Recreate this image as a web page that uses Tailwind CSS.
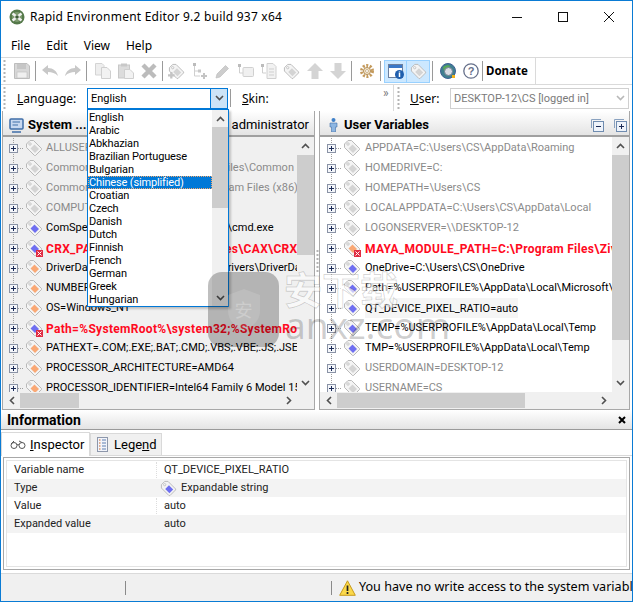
<!DOCTYPE html>
<html lang="en">
<head>
<meta charset="UTF-8" />
<title>Rapid Environment Editor</title>
<script src="https://cdn.jsdelivr.net/npm/@tailwindcss/browser@4"></script>
</head>
<body class="bg-white">
<svg class="hidden">
	<symbol id="tree" viewBox="0 0 20 20">
		<path d="M8.500 0V20M13 10.500H19" stroke="#a0a0a0" stroke-dasharray="1 1" fill="none" />
		<rect x="4.500" y="6.500" width="8" height="8" fill="#f4f6fa" stroke="#8a93a6" />
		<path d="M6 10.500H11M8.500 8V13" stroke="#1a2a55" />
	</symbol>
	<symbol id="tag" viewBox="0 0 18 18">
		<path d="M1.500 5 5 1.500H8.500L16.500 9.500V10.500L10.500 16.500H9.500L1.500 8.500Z" fill="#f4f4f4" stroke="#b9b9b9" />
		<circle cx="5" cy="5" r="1.200" fill="#fff" stroke="#b0b0b0" stroke-width=".7" />
	</symbol>
	<symbol id="tag-gray" viewBox="0 0 18 18">
		<use href="#tag" />
		<path d="M5.500 9.500 9.500 5.500 14 10 10 14Z" fill="#d4d4d4" />
	</symbol>
	<symbol id="tag-blue" viewBox="0 0 18 18">
		<use href="#tag" />
		<path d="M5.500 9.500 9.500 5.500 14 10 10 14Z" fill="#6f6ff0" />
	</symbol>
	<symbol id="tag-orange" viewBox="0 0 18 18">
		<use href="#tag" />
		<path d="M5.500 9.500 9.500 5.500 14 10 10 14Z" fill="#f9a875" />
	</symbol>
	<symbol id="badge" viewBox="0 0 18 18">
		<rect x="11" y="11" width="7" height="7" fill="#e02c42" />
		<path d="M12.500 12.500 16.500 16.500M16.500 12.500 12.500 16.500" stroke="#fff" />
	</symbol>
	<symbol id="up" viewBox="0 0 9 6"><path d="M1 5 4.500 1.500 8 5" fill="none" stroke="#505050" stroke-width="1.600" /></symbol>
	<symbol id="down" viewBox="0 0 9 6"><path d="M1 1 4.500 4.500 8 1" fill="none" stroke="#505050" stroke-width="1.600" /></symbol>
	<symbol id="left" viewBox="0 0 6 9"><path d="M5 1 1.500 4.500 5 8" fill="none" stroke="#505050" stroke-width="1.600" /></symbol>
	<symbol id="right" viewBox="0 0 6 9"><path d="M1 1 4.500 4.500 1 8" fill="none" stroke="#505050" stroke-width="1.600" /></symbol>
	<symbol id="grip" viewBox="0 0 3 22"><path d="M1.500 0V22" stroke="#b4b4b4" stroke-width="2" stroke-dasharray="2 2" /></symbol>
</svg>

<div class="relative flex h-[602px] w-[633px] flex-col overflow-hidden border border-[#0a7bd4] bg-white font-['Roboto',sans-serif] text-[11px] text-black">
	<!-- title bar -->
	<div class="flex h-[31px] shrink-0 items-center">
		<svg class="ml-[8px] h-[16px] w-[16px]" viewBox="0 0 16 16">
			<circle cx="8" cy="8" r="7.500" fill="#55794a" />
			<circle cx="8" cy="8" r="5" fill="#7d9a6f" />
			<path d="M3.500 4.500 12.500 11.500M12.500 4.500 3.500 11.500" stroke="#f0f0f0" stroke-width="2.400" />
			<circle cx="8" cy="8" r="1.800" fill="#3d5a36" />
		</svg>
		<span class="ml-[5px] font-['Noto_Sans',sans-serif] text-[12px] tracking-[0.22px]">Rapid Environment Editor 9.2 build 937 x64</span>
		<div class="ml-auto flex items-center">
			<svg class="h-[10px] w-[46px]" viewBox="0 0 46 10"><path d="M18 5.500H28" stroke="#111" /></svg>
			<svg class="h-[10px] w-[46px]" viewBox="0 0 46 10"><rect x="18.500" y=".5" width="9" height="9" fill="none" stroke="#111" /></svg>
			<svg class="h-[10px] w-[46px]" viewBox="0 0 46 10"><path d="M18 0 28 10M28 0 18 10" stroke="#111" /></svg>
		</div>
	</div>
	<!-- menu -->
	<div class="flex h-[25px] shrink-0 items-center gap-[16px] pt-[3px] pl-[10px] font-['Noto_Sans',sans-serif] text-[12px]">
		<span>File</span><span>Edit</span><span>View</span><span>Help</span>
	</div>
	<!-- toolbar -->
	<div class="flex h-[28px] shrink-0 border-y border-[#dadada]">
		<div class="flex h-full w-[535px] items-center border-r border-[#dadada] pl-[2px]">
			<svg class="h-[22px] w-[3px]"><use href="#grip" /></svg>
			<div class="w-[4px]"></div>
			<div class="flex h-[23px] w-[23px] items-center justify-center">
				<svg class="h-[16px] w-[16px]" viewBox="0 0 16 16"><path d="M.5.5H13L15.500 3V15.500H.5Z" fill="#d8d8d8" stroke="#bdbdbd" /><rect x="3" y="1" width="9" height="5" fill="#c6c6c6" /><rect x="3" y="9" width="10" height="6" fill="#f0f0f0" stroke="#bdbdbd" stroke-width=".6" /></svg>
			</div>
			<div class="mx-[2px] h-[20px] w-[1px] bg-[#9a9a9a]"></div>
			<div class="flex h-[23px] w-[23px] items-center justify-center">
				<svg class="h-[12px] w-[16px]" viewBox="0 0 16 12"><path d="M0 5 6 0V3C11 3 15 6 16 11 13 8 10 7 6 7V10Z" fill="#c8c8c8" /></svg>
			</div>
			<div class="flex h-[23px] w-[23px] items-center justify-center">
				<svg class="h-[12px] w-[16px]" viewBox="0 0 16 12"><path d="M16 5 10 0V3C5 3 1 6 0 11 3 8 6 7 10 7V10Z" fill="#c8c8c8" /></svg>
			</div>
			<div class="mx-[2px] h-[20px] w-[1px] bg-[#9a9a9a]"></div>
			<div class="w-[2px]"></div>
			<div class="flex h-[23px] w-[23px] items-center justify-center">
				<svg class="h-[16px] w-[16px]" viewBox="0 0 16 16"><path d="M.5.5H7L9 2.500V12H.5Z" fill="#eee" stroke="#d4d4d4" /><path d="M6.500 4.500H12L15.500 8V15.500H6.500Z" fill="#f2f2f2" stroke="#cfcfcf" /></svg>
			</div>
			<div class="flex h-[23px] w-[23px] items-center justify-center">
				<svg class="h-[16px] w-[16px]" viewBox="0 0 16 16"><rect x=".5" y="2" width="11" height="13" fill="#dcdcdc" stroke="#c8c8c8" /><rect x="3" y=".5" width="6" height="3" fill="#c8c8c8" /><path d="M6.500 6.500H12L15.500 10V15.500H6.500Z" fill="#f2f2f2" stroke="#cfcfcf" /></svg>
			</div>
			<div class="flex h-[23px] w-[23px] items-center justify-center">
				<svg class="h-[16px] w-[16px]" viewBox="0 0 16 16"><path d="M2 2 14 14M14 2 2 14" stroke="#bcbcbc" stroke-width="4.400" /></svg>
			</div>
			<div class="mx-[2px] h-[20px] w-[1px] bg-[#9a9a9a]"></div>
			<div class="flex h-[23px] w-[23px] items-center justify-center">
				<svg class="h-[17px] w-[17px]" viewBox="0 0 18 18"><use href="#tag-gray" /><path d="M0 13H7M3.500 9.500V16.500" stroke="#c4c4c4" stroke-width="2.400" /></svg>
			</div>
			<div class="flex h-[23px] w-[23px] items-center justify-center">
				<svg class="h-[16px] w-[16px]" viewBox="0 0 16 16"><path d="M2.500 3V13H8M2.500 8H6" stroke="#cfcfcf" fill="none" /><rect x="1" y="0" width="3" height="3" fill="#bcbcbc" /><rect x="6" y="6.500" width="3" height="3" fill="#c8c8c8" /><path d="M9 13H15M12 10V16" stroke="#c4c4c4" stroke-width="2" /></svg>
			</div>
			<div class="flex h-[23px] w-[23px] items-center justify-center">
				<svg class="h-[15px] w-[15px]" viewBox="0 0 15 15"><path d="M1 14 2 10 10.500 1.500 13.500 4.500 5 13Z" fill="#cdcdcd" stroke="#bdbdbd" stroke-width=".7" /></svg>
			</div>
			<div class="flex h-[23px] w-[23px] items-center justify-center">
				<svg class="h-[16px] w-[16px]" viewBox="0 0 16 16"><path d="M1.500 2V10H5" stroke="#cfcfcf" fill="none" /><rect x="0" y="1" width="3" height="3" fill="#bcbcbc" /><rect x="5" y="4.500" width="10.500" height="9" rx="1" fill="#f0f0f0" stroke="#d0d0d0" /></svg>
			</div>
			<div class="flex h-[23px] w-[23px] items-center justify-center">
				<svg class="h-[16px] w-[16px]" viewBox="0 0 16 16"><path d="M1.500 2V10H5" stroke="#cfcfcf" fill="none" /><rect x="0" y="1" width="3" height="3" fill="#bcbcbc" /><path d="M6 .5H12L15 3.500V15.500H6Z" fill="#f2f2f2" stroke="#d0d0d0" /><path d="M8 6H13M8 9H13M8 12H13" stroke="#cfcfcf" /></svg>
			</div>
			<div class="flex h-[23px] w-[23px] items-center justify-center">
				<svg class="h-[17px] w-[17px]" viewBox="0 0 18 18"><use href="#tag-gray" /></svg>
			</div>
			<div class="flex h-[23px] w-[23px] items-center justify-center">
				<svg class="h-[16px] w-[16px]" viewBox="0 0 16 16"><path d="M8 0 16 8H11.500V16H4.500V8H0Z" fill="#d4d4d4" /></svg>
			</div>
			<div class="flex h-[23px] w-[23px] items-center justify-center">
				<svg class="h-[16px] w-[16px]" viewBox="0 0 16 16"><path d="M8 16 16 8H11.500V0H4.500V8H0Z" fill="#d4d4d4" /></svg>
			</div>
			<div class="mx-[2px] h-[20px] w-[1px] bg-[#9a9a9a]"></div>
			<div class="w-[1px]"></div>
			<div class="flex h-[23px] w-[23px] items-center justify-center">
				<svg class="h-[16px] w-[16px]" viewBox="0 0 16 16"><circle cx="8" cy="8" r="5.500" fill="none" stroke="#c49a5c" stroke-width="3" stroke-dasharray="2 1.500" /><circle cx="8" cy="8" r="3.500" fill="#f6ead4" stroke="#b08a50" /><circle cx="8" cy="8" r="1.500" fill="#fff" stroke="#b08a50" stroke-width=".6" /></svg>
			</div>
			<div class="mx-[2px] h-[20px] w-[1px] bg-[#9a9a9a]"></div>
			<div class="w-[1px]"></div>
			<div class="flex h-[23px] w-[23px] items-center justify-center border border-[#99d1ff] bg-[#cce8ff]">
				<svg class="h-[16px] w-[16px]" viewBox="0 0 16 16"><rect x=".5" y="1.500" width="14" height="13" fill="#fff" stroke="#6c7f9e" /><rect x="1" y="2" width="13" height="3" fill="#3a78c8" /><circle cx="11.500" cy="11.500" r="4.500" fill="#1f5fae" /><path d="M11.500 10V14M11.500 8.500V9.500" stroke="#fff" stroke-width="1.500" /></svg>
			</div>
			<div class="flex h-[23px] w-[23px] items-center justify-center border border-[#99d1ff] border-l-0 bg-[#cce8ff]">
				<svg class="h-[17px] w-[17px]" viewBox="0 0 18 18"><use href="#tag-gray" /></svg>
			</div>
			<div class="mx-[2px] h-[20px] w-[1px] bg-[#9a9a9a]"></div>
			<div class="w-[1px]"></div>
			<div class="flex h-[23px] w-[23px] items-center justify-center">
				<svg class="h-[16px] w-[16px]" viewBox="0 0 16 16"><circle cx="8" cy="8" r="7.500" fill="#3f7f8f" stroke="#3d5f94" /><path d="M3 4Q7 1 10 3L8 7 4 8Z" fill="#58a95a" /><circle cx="8.500" cy="8.500" r="4" fill="#d8dce4" stroke="#6f7f92" /><rect x="12" y="12" width="3" height="3" fill="#f2b21a" /></svg>
			</div>
			<div class="flex h-[23px] w-[23px] items-center justify-center">
				<svg class="h-[16px] w-[16px]" viewBox="0 0 16 16"><circle cx="8" cy="8" r="7.200" fill="#fff" stroke="#66708a" stroke-width="1.300" /><text x="8" y="12" text-anchor="middle" font-family="Liberation Sans" font-size="11" font-weight="700" fill="#66708a">?</text></svg>
			</div>
			<div class="mr-[3px] h-[20px] w-[1px] bg-[#9a9a9a]"></div>
			<span class="font-['Noto_Sans',sans-serif] text-[11.500px] font-bold">Donate</span>
		</div>
	</div>
	<!-- language bar -->
	<div class="flex h-[26px] shrink-0 items-center pl-[2px]">
		<svg class="h-[22px] w-[3px]"><use href="#grip" /></svg>
		<span class="ml-[11px] w-[70px] pt-[2px] font-['Noto_Sans',sans-serif] text-[12px]"><u>L</u>anguage:</span>
		<div class="flex h-[21px] w-[141px] items-center justify-between border border-[#0078d7] pl-[3px]">
			<span class="pt-[2px]">English</span>
			<div class="flex h-full w-[17px] items-center justify-center border-l border-[#0078d7] bg-[#cce4f7]">
				<svg class="h-[6px] w-[9px]"><use href="#down" /></svg>
			</div>
		</div>
		<div class="ml-[2px] h-[18px] w-[1px] bg-[#9a9a9a]"></div>
		<span class="ml-[11px] w-[141px] pt-[2px] font-['Noto_Sans',sans-serif] text-[12px]"><u>S</u>kin:</span>
		<span class="w-[10px] pb-[11px] text-[12px] leading-none text-[#777]">»</span>
		<div class="h-full w-[1px] bg-[#dadada]"></div>
		<svg class="ml-[3px] h-[22px] w-[3px]"><use href="#grip" /></svg>
		<span class="ml-[10px] w-[40px] pt-[2px] font-['Noto_Sans',sans-serif] text-[12px]"><u>U</u>ser:</span>
		<div class="flex h-[21px] w-[179px] items-center justify-between border border-[#d0d0d0] pl-[3px] pr-[3px] text-[#7a7a7a]">
			<span class="pt-[2px]">DESKTOP-12\CS [logged in]</span>
			<svg class="h-[6px] w-[9px] opacity-40"><use href="#down" /></svg>
		</div>
	</div>
	<!-- panels -->
	<div class="flex h-[299px] shrink-0">
		<!-- system -->
		<div class="ml-[1px] flex w-[313px] shrink-0 flex-col border-x border-b border-[#a8a8a8] bg-[#f0f0f0]">
			<div class="flex h-[26px] shrink-0 items-center justify-between border-b-2 border-[#a0a0a0] bg-linear-to-b from-white to-[#e4e4e4] pt-[4px] pr-[5px] pl-[6px]">
				<div class="flex items-center gap-[4px]">
					<svg class="h-[15px] w-[15px]" viewBox="0 0 15 15"><rect x="1" y="1" width="13" height="10" rx="1" fill="#c8d8f0" stroke="#3f6ea8" stroke-width="1.500" /><path d="M3.500 4H11M3.500 7H9" stroke="#3f6ea8" /><path d="M3 14H12" stroke="#3f6ea8" stroke-width="1.500" /></svg>
					<span class="text-[13px] font-bold">System ...</span>
				</div>
				<span class="text-[13px]">administrator</span>
			</div>
			<div class="flex min-h-0 flex-1">
				<div class="min-w-0 flex-1 overflow-hidden whitespace-nowrap pt-[1px] pl-[2px] [&_span]:pt-[1px] [&_svg]:shrink-0">
					<div class="flex h-5 items-center text-[#8a8a8a]"><svg class="h-5 w-5"><use href="#tree" /></svg><svg class="h-[18px] w-[18px]"><use href="#tag-gray" /></svg><span class="ml-[3px]">ALLUSERSPROFILE=C:\ProgramData</span></div>
					<div class="flex h-5 items-center text-[#8a8a8a]"><svg class="h-5 w-5"><use href="#tree" /></svg><svg class="h-[18px] w-[18px]"><use href="#tag-gray" /></svg><span class="ml-[3px]">CommonProgramFiles=C:\Program Files\Common Files</span></div>
					<div class="flex h-5 items-center text-[#8a8a8a]"><svg class="h-5 w-5"><use href="#tree" /></svg><svg class="h-[18px] w-[18px]"><use href="#tag-gray" /></svg><span class="ml-[3px]">CommonProgramFiles(x86)=C:\Program Files (x86)\Common</span></div>
					<div class="flex h-5 items-center text-[#8a8a8a]"><svg class="h-5 w-5"><use href="#tree" /></svg><svg class="h-[18px] w-[18px]"><use href="#tag-gray" /></svg><span class="ml-[3px]">COMPUTERNAME=DESKTOP-12</span></div>
					<div class="flex h-5 items-center"><svg class="h-5 w-5"><use href="#tree" /></svg><svg class="h-[18px] w-[18px]"><use href="#tag-blue" /></svg><span class="ml-[3px]">ComSpec=%SystemRoot%\system32\cmd.exe</span></div>
					<div class="flex h-5 items-center text-[12px] font-bold tracking-[0.3px] text-[#ff0a1e]"><svg class="h-5 w-5"><use href="#tree" /></svg><svg class="h-[18px] w-[18px]"><use href="#tag-blue" /><use href="#badge" /></svg><span class="ml-[3px]">CRX_PATH_X64=C:\Program Files\CAX\CRX</span></div>
					<div class="flex h-5 items-center"><svg class="h-5 w-5"><use href="#tree" /></svg><svg class="h-[18px] w-[18px]"><use href="#tag-orange" /></svg><span class="ml-[3px]">DriverData=C:\Windows\System32\Drivers\DriverData</span></div>
					<div class="flex h-5 items-center"><svg class="h-5 w-5"><use href="#tree" /></svg><svg class="h-[18px] w-[18px]"><use href="#tag-orange" /></svg><span class="ml-[3px]">NUMBER_OF_PROCESSORS=4</span></div>
					<div class="flex h-5 items-center"><svg class="h-5 w-5"><use href="#tree" /></svg><svg class="h-[18px] w-[18px]"><use href="#tag-orange" /></svg><span class="ml-[3px]">OS=Windows_NT</span></div>
					<div class="flex h-5 items-center text-[12px] font-bold tracking-[0.3px] text-[#ff0a1e]"><svg class="h-5 w-5"><use href="#tree" /></svg><svg class="h-[18px] w-[18px]"><use href="#tag-blue" /><use href="#badge" /></svg><span class="ml-[3px]">Path=%SystemRoot%\system32;%SystemRoot%</span></div>
					<div class="flex h-5 items-center"><svg class="h-5 w-5"><use href="#tree" /></svg><svg class="h-[18px] w-[18px]"><use href="#tag-orange" /></svg><span class="ml-[3px]">PATHEXT=.COM;.EXE;.BAT;.CMD;.VBS;.VBE;.JS;.JSE;.WSF</span></div>
					<div class="flex h-5 items-center"><svg class="h-5 w-5"><use href="#tree" /></svg><svg class="h-[18px] w-[18px]"><use href="#tag-orange" /></svg><span class="ml-[3px]">PROCESSOR_ARCHITECTURE=AMD64</span></div>
					<div class="flex h-5 items-center"><svg class="h-5 w-5"><use href="#tree" /></svg><svg class="h-[18px] w-[18px]"><use href="#tag-orange" /></svg><span class="ml-[3px]">PROCESSOR_IDENTIFIER=Intel64 Family 6 Model 158</span></div>
				</div>
				<div class="flex w-[17px] shrink-0 flex-col items-center">
					<div class="flex h-[18px] items-center justify-center"><svg class="h-[6px] w-[9px]"><use href="#up" /></svg></div>
					<div class="h-[100px] w-full bg-[#cdcdcd]"></div>
					<div class="flex-1"></div>
					<div class="flex h-[18px] items-center justify-center"><svg class="h-[6px] w-[9px]"><use href="#down" /></svg></div>
				</div>
			</div>
			<div class="flex h-[17px] shrink-0 items-center pr-[17px]">
				<div class="flex w-[17px] justify-center"><svg class="h-[9px] w-[6px]"><use href="#left" /></svg></div>
				<div class="h-[15px] w-[59px] bg-[#cdcdcd]"></div>
				<div class="flex-1"></div>
				<div class="flex w-[17px] justify-center"><svg class="h-[9px] w-[6px]"><use href="#right" /></svg></div>
			</div>
		</div>
		<!-- splitter -->
		<div class="flex w-[4px] shrink-0 items-center justify-center">
			<svg class="h-[22px] w-[3px]"><use href="#grip" /></svg>
		</div>
		<!-- user -->
		<div class="flex w-[311px] shrink-0 flex-col border-x border-b border-[#a8a8a8] bg-white">
			<div class="flex h-[26px] shrink-0 items-center justify-between border-b-2 border-[#a0a0a0] bg-linear-to-b from-white to-[#e4e4e4] pt-[4px] pr-[2px] pl-[9px]">
				<div class="flex items-center gap-[6px]">
					<svg class="h-[14px] w-[9px]" viewBox="0 0 9 14"><circle cx="4.500" cy="2" r="2" fill="#3f80c8" /><path d="M1 5H8V9H6.500V14H2.500V9H1Z" fill="#8db6e2" stroke="#3f6ea8" stroke-width=".6" /></svg>
					<span class="text-[13px] font-bold">User Variables</span>
				</div>
				<div class="flex items-center gap-[10px]">
					<svg class="h-[13px] w-[13px]" viewBox="0 0 13 13"><path d="M.5 9V.5H10" fill="none" stroke="#8aa2c0" /><rect x="2.500" y="2.500" width="10" height="10" fill="#eef3fa" stroke="#6f8cb0" /><path d="M5 7.500H10" stroke="#1a2a55" /></svg>
					<svg class="h-[13px] w-[13px]" viewBox="0 0 13 13"><path d="M.5 9V.5H10" fill="none" stroke="#8aa2c0" /><rect x="2.500" y="2.500" width="10" height="10" fill="#eef3fa" stroke="#6f8cb0" /><path d="M5 7.500H10M7.500 5V10" stroke="#1a2a55" /></svg>
				</div>
			</div>
			<div class="flex min-h-0 flex-1">
				<div class="min-w-0 flex-1 overflow-hidden whitespace-nowrap pt-[1px] pl-[3px] [&_span]:pt-[1px] [&_svg]:shrink-0">
					<div class="flex h-5 items-center text-[#8a8a8a]"><svg class="h-5 w-5"><use href="#tree" /></svg><svg class="h-[18px] w-[18px]"><use href="#tag-gray" /></svg><span class="ml-[4px]">APPDATA=C:\Users\CS\AppData\Roaming</span></div>
					<div class="flex h-5 items-center text-[#8a8a8a]"><svg class="h-5 w-5"><use href="#tree" /></svg><svg class="h-[18px] w-[18px]"><use href="#tag-gray" /></svg><span class="ml-[4px]">HOMEDRIVE=C:</span></div>
					<div class="flex h-5 items-center text-[#8a8a8a]"><svg class="h-5 w-5"><use href="#tree" /></svg><svg class="h-[18px] w-[18px]"><use href="#tag-gray" /></svg><span class="ml-[4px]">HOMEPATH=\Users\CS</span></div>
					<div class="flex h-5 items-center text-[#8a8a8a]"><svg class="h-5 w-5"><use href="#tree" /></svg><svg class="h-[18px] w-[18px]"><use href="#tag-gray" /></svg><span class="ml-[4px]">LOCALAPPDATA=C:\Users\CS\AppData\Local</span></div>
					<div class="flex h-5 items-center text-[#8a8a8a]"><svg class="h-5 w-5"><use href="#tree" /></svg><svg class="h-[18px] w-[18px]"><use href="#tag-gray" /></svg><span class="ml-[4px]">LOGONSERVER=\\DESKTOP-12</span></div>
					<div class="flex h-5 items-center text-[12px] font-bold tracking-[0.3px] text-[#ff0a1e]"><svg class="h-5 w-5"><use href="#tree" /></svg><svg class="h-[18px] w-[18px]"><use href="#tag-orange" /><use href="#badge" /></svg><span class="ml-[4px]">MAYA_MODULE_PATH=C:\Program Files\Ziva</span></div>
					<div class="flex h-5 items-center"><svg class="h-5 w-5"><use href="#tree" /></svg><svg class="h-[18px] w-[18px]"><use href="#tag-blue" /></svg><span class="ml-[4px]">OneDrive=C:\Users\CS\OneDrive</span></div>
					<div class="flex h-5 items-center"><svg class="h-5 w-5"><use href="#tree" /></svg><svg class="h-[18px] w-[18px]"><use href="#tag-blue" /></svg><span class="ml-[4px]">Path=%USERPROFILE%\AppData\Local\Microsoft\WindowsApps</span></div>
					<div class="flex h-5 items-center"><svg class="h-5 w-5"><use href="#tree" /></svg><svg class="h-[18px] w-[18px]"><use href="#tag-blue" /></svg><span class="ml-[4px] bg-[#f5f5f5] leading-[19px]">QT_DEVICE_PIXEL_RATIO=auto</span></div>
					<div class="flex h-5 items-center"><svg class="h-5 w-5"><use href="#tree" /></svg><svg class="h-[18px] w-[18px]"><use href="#tag-blue" /></svg><span class="ml-[4px]">TEMP=%USERPROFILE%\AppData\Local\Temp</span></div>
					<div class="flex h-5 items-center"><svg class="h-5 w-5"><use href="#tree" /></svg><svg class="h-[18px] w-[18px]"><use href="#tag-blue" /></svg><span class="ml-[4px]">TMP=%USERPROFILE%\AppData\Local\Temp</span></div>
					<div class="flex h-5 items-center text-[#8a8a8a]"><svg class="h-5 w-5"><use href="#tree" /></svg><svg class="h-[18px] w-[18px]"><use href="#tag-gray" /></svg><span class="ml-[4px]">USERDOMAIN=DESKTOP-12</span></div>
					<div class="flex h-5 items-center text-[#8a8a8a]"><svg class="h-5 w-5"><use href="#tree" /></svg><svg class="h-[18px] w-[18px]"><use href="#tag-gray" /></svg><span class="ml-[4px]">USERNAME=CS</span></div>
				</div>
				<div class="flex w-[17px] shrink-0 flex-col items-center bg-[#f0f0f0]">
					<div class="flex h-[18px] items-center justify-center"><svg class="h-[6px] w-[9px]"><use href="#up" /></svg></div>
					<div class="h-[185px] w-full bg-[#cdcdcd]"></div>
					<div class="flex-1"></div>
					<div class="flex h-[18px] items-center justify-center"><svg class="h-[6px] w-[9px]"><use href="#down" /></svg></div>
				</div>
			</div>
			<div class="flex h-[17px] shrink-0 items-center bg-[#f0f0f0] pr-[17px]">
				<div class="flex w-[17px] justify-center"><svg class="h-[9px] w-[6px]"><use href="#left" /></svg></div>
				<div class="h-[15px] w-[188px] bg-[#cdcdcd]"></div>
				<div class="flex-1"></div>
				<div class="flex w-[17px] justify-center"><svg class="h-[9px] w-[6px]"><use href="#right" /></svg></div>
			</div>
		</div>
	</div>
	<!-- information -->
	<div class="flex h-[20px] shrink-0 items-center justify-between border-b border-[#9a9a9a] bg-linear-to-b from-white to-[#e4e4e4] pt-[1px] pr-[6px] pl-[6px]">
		<span class="text-[14px] font-bold">Information</span>
		<svg class="h-[8px] w-[8px]" viewBox="0 0 8 8"><path d="M1 1 7 7M7 1 1 7" stroke="#000" stroke-width="2" /></svg>
	</div>
	<div class="flex h-[25px] shrink-0 items-end">
		<div class="z-10 -mb-px flex h-[24px] w-[89px] items-center gap-[4px] border-x border-t border-[#d9d9d9] bg-white pl-[8px] text-[13px]">
			<svg class="h-[9px] w-[16px]" viewBox="0 0 16 9"><circle cx="4" cy="5.500" r="3" fill="none" stroke="#555" /><circle cx="12" cy="5.500" r="3" fill="none" stroke="#555" /><path d="M7 5Q8 4 9 5M9 1 12 2.500M4 1 1 4" fill="none" stroke="#555" /></svg>
			<span><u>I</u>nspector</span>
		</div>
		<div class="flex h-[22px] w-[72px] items-center gap-[6px] border-x border-t border-[#d9d9d9] bg-[#f0f0f0] pl-[6px] text-[13px]">
			<svg class="h-[15px] w-[11px]" viewBox="0 0 11 15"><rect x=".5" y=".5" width="10" height="14" fill="#f2f4fa" stroke="#8d97ab" /><path d="M2 3H3.500M2 6H3.500M2 9H3.500M2 12H3.500" stroke="#c9662a" /><path d="M5 3H9M5 6H9M5 9H9M5 12H9" stroke="#5f7fb0" /></svg>
			<span>Lege<u>n</u>d</span>
		</div>
	</div>
	<div class="h-[118px] shrink-0 border-t border-[#d9d9d9] px-[2px] pt-[1px]">
		<div class="h-[113px] border border-[#a8a8a8] p-[2px]">
			<div class="h-full border border-[#e4e4e4] text-[#222]">
				<div class="flex h-[18px] items-center"><span class="w-[149px] pl-[7px]">Variable name</span><span class="border-l border-dotted border-[#ddd] pl-[7px]">QT_DEVICE_PIXEL_RATIO</span></div>
				<div class="flex h-[18px] items-center bg-[#f3f3f3]"><span class="w-[149px] pl-[7px]">Type</span><svg class="ml-[4px] h-[17px] w-[17px]"><use href="#tag-blue" /></svg><span class="ml-[4px]">Expandable string</span></div>
				<div class="flex h-[18px] items-center"><span class="w-[149px] pl-[7px]">Value</span><span class="border-l border-dotted border-[#ddd] pl-[7px]">auto</span></div>
				<div class="flex h-[18px] items-center bg-[#f3f3f3]"><span class="w-[149px] pl-[7px]">Expanded value</span><span class="pl-[8px]">auto</span></div>
			</div>
		</div>
	</div>
	<!-- status bar -->
	<div class="flex min-h-0 flex-1 items-center overflow-hidden border-t border-[#dadada] bg-[#f0f0f0] whitespace-nowrap">
		<div class="ml-[124px] h-[14px] w-[1px] shrink-0 bg-[#8a8a8a]"></div>
		<div class="ml-[205px] h-[14px] w-[1px] shrink-0 bg-[#8a8a8a]"></div>
		<svg class="ml-[7px] h-[16px] w-[17px] shrink-0" viewBox="0 0 17 16"><path d="M8.500 .8 16.300 15.300H.7Z" fill="#fbd84a" stroke="#c79a1c" /><path d="M8.500 5.500V11M8.500 12V14" stroke="#222" stroke-width="1.700" /></svg>
		<span class="ml-[3px] font-['Noto_Sans',sans-serif] text-[12.600px]">You have no write access to the system variables</span>
	</div>

	<!-- language dropdown -->
	<div class="absolute top-[108px] left-[86px] flex h-[198px] w-[142px] border border-[#0078d7] bg-white leading-[13px] shadow-[2px_2px_2px_rgba(0,0,0,0.2)]">
		<div class="flex-1 pt-[1px] tracking-[-0.15px]">
			<div class="h-[13px] pl-[1px]">English</div>
			<div class="h-[13px] pl-[1px]">Arabic</div>
			<div class="h-[13px] pl-[1px]">Abkhazian</div>
			<div class="h-[13px] pl-[1px]">Brazilian Portuguese</div>
			<div class="h-[13px] pl-[1px]">Bulgarian</div>
			<div class="h-[13px] border border-dotted border-[#f3a76b] bg-[#0078d7] leading-[11px] text-white">Chinese (simplified)</div>
			<div class="h-[13px] pl-[1px]">Croatian</div>
			<div class="h-[13px] pl-[1px]">Czech</div>
			<div class="h-[13px] pl-[1px]">Danish</div>
			<div class="h-[13px] pl-[1px]">Dutch</div>
			<div class="h-[13px] pl-[1px]">Finnish</div>
			<div class="h-[13px] pl-[1px]">French</div>
			<div class="h-[13px] pl-[1px]">German</div>
			<div class="h-[13px] pl-[1px]">Greek</div>
			<div class="h-[13px] pl-[1px]">Hungarian</div>
		</div>
		<div class="flex w-[16px] flex-col bg-[#f0f0f0]">
			<div class="flex h-[17px] items-center justify-center"><svg class="h-[6px] w-[9px]"><use href="#up" /></svg></div>
			<div class="h-[81px] bg-[#cdcdcd]"></div>
			<div class="flex-1"></div>
			<div class="flex h-[17px] items-center justify-center"><svg class="h-[6px] w-[9px]"><use href="#down" /></svg></div>
		</div>
	</div>

	<!-- watermark -->
	<div class="pointer-events-none absolute top-[271px] left-[207px] flex h-[75px] w-[71px] items-center justify-center rounded-[14px] bg-black/25">
		<svg class="absolute h-[42px] w-[32px]" viewBox="0 0 32 42"><path d="M16 0 32 6V22C32 32 24 38 16 42 8 38 0 32 0 22V6Z" fill="#fff" fill-opacity=".12" /></svg>
		<span class="relative font-['Noto_Sans_CJK_SC',sans-serif] text-[18px] text-white/25">安</span>
	</div>
	<span class="pointer-events-none absolute top-[268px] left-[283px] font-['Noto_Sans_CJK_SC',sans-serif] text-[38px] leading-none font-bold text-white/60 [-webkit-text-stroke:1px_rgba(0,0,0,0.16)]">安下载</span>
	<span class="pointer-events-none absolute top-[305px] left-[284px] font-['Noto_Sans',sans-serif] text-[37px] leading-none text-black/20">anxz.com</span>
</div>
</body>
</html>
